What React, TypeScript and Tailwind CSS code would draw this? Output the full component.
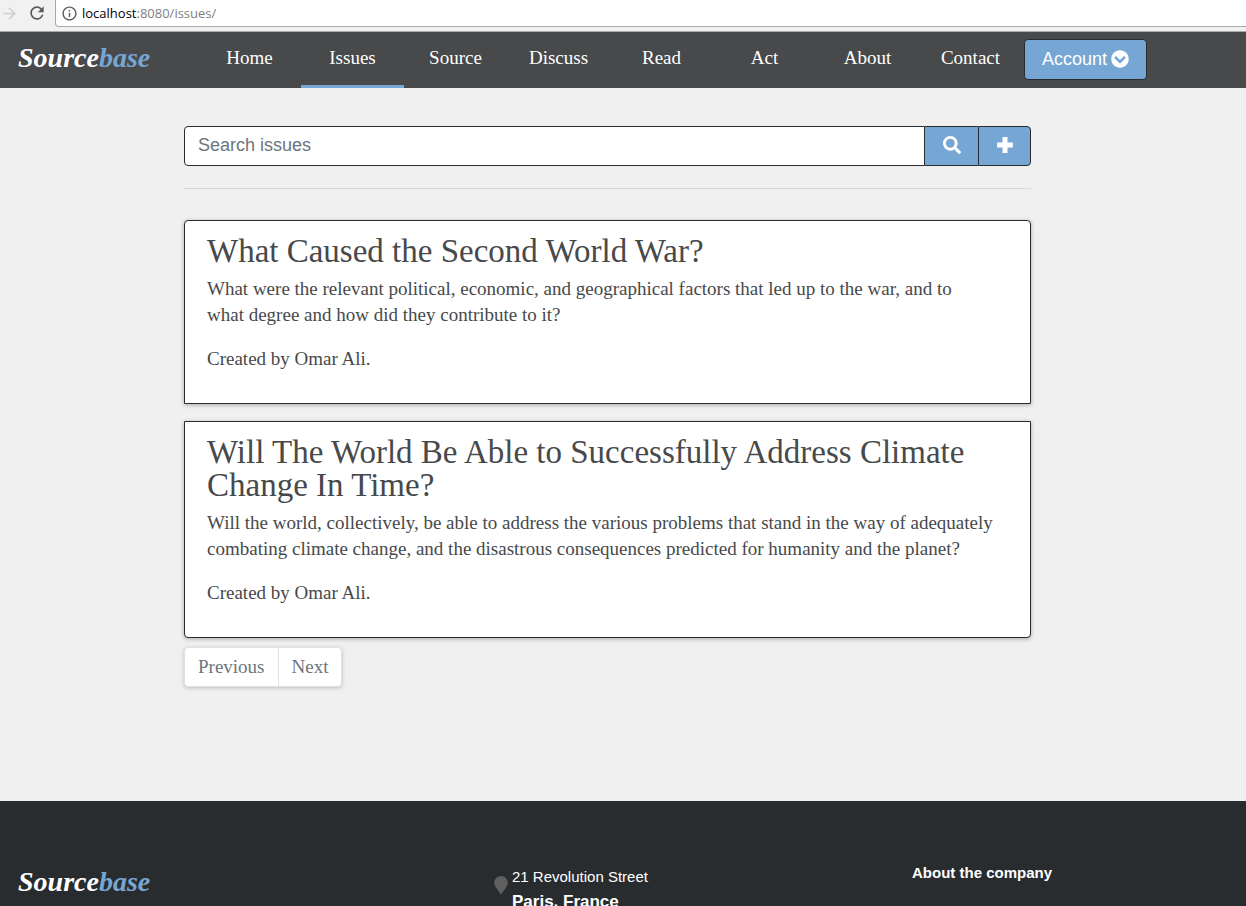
import { FaChevronCircleDown, FaMapMarker, FaSearch } from "react-icons/fa";
import { MdArrowForward, MdInfoOutline, MdRefresh } from "react-icons/md";

const navItems = ["Home", "Issues", "Source", "Discuss", "Read", "Act", "About", "Contact"];

const issues = [
  {
    title: "What Caused the Second World War?",
    body: "What were the relevant political, economic, and geographical factors that led up to the war, and to\nwhat degree and how did they contribute to it?",
    author: "Omar Ali",
  },
  {
    title: "Will The World Be Able to Successfully Address Climate Change In Time?",
    body: "Will the world, collectively, be able to address the various problems that stand in the way of adequately\ncombating climate change, and the disastrous consequences predicted for humanity and the planet?",
    author: "Omar Ali",
  },
];

function Logo() {
  return (
    <a href="#" className="block w-[180px] shrink-0 font-['Liberation_Serif',serif] text-[28px] leading-9 font-bold italic text-white">
      Source<span className="text-[#76a6d4]">base</span>
    </a>
  );
}

function PlusIcon() {
  return (
    <svg width="16" height="16" viewBox="0 0 16 16" fill="currentColor" aria-hidden="true">
      <path d="M6 0h4q.5 0 .5.5v5h4.9q.5 0 .5.5v4q0 .5-.5.5h-4.9v5q0 .5-.5.5h-4q-.5 0-.5-.5v-5h-4.9q-.5 0-.5-.5v-4q0-.5.5-.5h4.9v-5q0-.5.5-.5z" />
    </svg>
  );
}

function BrowserBar() {
  return (
    <div className="flex h-8 items-start border-b border-[#a9abae] bg-[#f1f1f1]">
      <div className="flex h-[26px] w-[55px] shrink-0 items-center gap-2">
        <button aria-label="Forward" className="text-[#cfcfcf]"><MdArrowForward size={19} /></button>
        <button aria-label="Reload" className="text-[#5a5a5a]"><MdRefresh size={20} /></button>
      </div>
      <div className="flex h-[27px] flex-1 items-center gap-1 rounded-bl-sm border-b border-l border-[#a9a9a9] bg-white pl-[5px]">
        <MdInfoOutline size={17} className="text-[#5a5a5a]" />
        <span className="font-['Open_Sans',sans-serif] text-[13px] leading-5 text-[#808080]">
          <span className="text-black">localhost</span>:8080/issues/
        </span>
      </div>
    </div>
  );
}

function NavBar() {
  return (
    <header className="flex h-14 items-start bg-[#47494b] pl-[18px]">
      <div className="pt-2">
        <Logo />
      </div>
      <nav className="flex items-start gap-0.5">
        <ul className="flex">
          {navItems.map((item) => (
            <li key={item}>
              <a
                href="#"
                className={`block h-14 w-[103px] border-b-[3px] pt-[13px] text-center font-['Liberation_Serif',serif] text-[19px] leading-[26px] text-white ${
                  item === "Issues" ? "border-[#76a6d4]" : "border-transparent"
                }`}
              >
                {item}
              </a>
            </li>
          ))}
        </ul>
        <button className="mt-[7px] flex h-[41px] w-[123px] items-center justify-center gap-1 rounded border border-[#282c2f] bg-[#76a6d4] pb-0.5 text-lg text-white">
          Account <FaChevronCircleDown size={18} />
        </button>
      </nav>
    </header>
  );
}

export default function App() {
  return (
    <div className="flex h-screen flex-col overflow-hidden bg-[#f0f0f0] font-['Liberation_Sans',Arial,sans-serif]">
      <BrowserBar />
      <div className="flex-1 overflow-hidden">
        <NavBar />
        <main className="pt-[38px] pr-[31px] pb-[114px] text-[#47494b]">
          <div className="mx-auto max-w-[847px]">
            <form className="flex h-10" onSubmit={(e) => e.preventDefault()}>
              <input
                type="text"
                aria-label="Search issues"
                placeholder="Search issues"
                className="min-w-0 flex-1 rounded-l border border-[#282c2f] bg-white px-[13px] pb-0.5 text-lg placeholder:text-[#6c757d]"
              />
              <button aria-label="Search" className="flex w-[53px] items-center justify-center border-y border-[#282c2f] bg-[#76a6d4] pb-0.5 text-white">
                <FaSearch size={18} />
              </button>
              <button aria-label="Add issue" className="flex w-[53px] items-center justify-center rounded-r border border-[#282c2f] bg-[#76a6d4] pb-0.5 text-white">
                <PlusIcon />
              </button>
            </form>
            <hr className="mt-[22px] mb-[31px] border-[#d8d8d8]" />
            <div className="flex flex-col gap-[17px]">
              {issues.map((issue) => (
                <article
                  key={issue.title}
                  className="border border-[#282c2f] bg-white px-[22px] pt-3.5 pb-[31px] font-['Liberation_Serif',serif] text-[19px] leading-[26px] shadow-[0_1px_4px_rgba(0,0,0,0.3)] first:rounded-t last:rounded-b"
                >
                  <h2 className="mb-2 text-[33px] leading-[33px]">{issue.title}</h2>
                  <p className="whitespace-pre-line">{issue.body}</p>
                  <p className="mt-[18px]">Created by {issue.author}.</p>
                </article>
              ))}
            </div>
            <nav
              aria-label="Pagination"
              className="mt-[9px] flex h-10 w-fit divide-x divide-[#dee2e6] rounded border border-[#dee2e6] bg-white font-['Liberation_Serif',serif] text-[19px] text-[#6c757d] shadow-[0_1px_4px_rgba(0,0,0,0.2)]"
            >
              <a href="#" className="flex items-center px-[13px]">Previous</a>
              <a href="#" className="flex items-center px-[13px]">Next</a>
            </nav>
          </div>
        </main>
        <footer className="flex h-[300px] items-start bg-[#282c2f] pl-[18px] text-white">
          <div className="w-[476px] pt-[63px]">
            <Logo />
          </div>
          <address className="flex w-[418px] items-start gap-1 pt-[63px] not-italic">
            <FaMapMarker size={18} className="mt-3 w-3.5 shrink-0 text-[#5f5f5f]" />
            <p className="text-[15px] leading-[25px]">
              21 Revolution Street
              <br />
              <strong className="text-[17px] leading-6">Paris, France</strong>
            </p>
          </address>
          <h3 className="pt-[63px] text-[15px] leading-[18px] font-bold">About the company</h3>
        </footer>
      </div>
    </div>
  );
}
